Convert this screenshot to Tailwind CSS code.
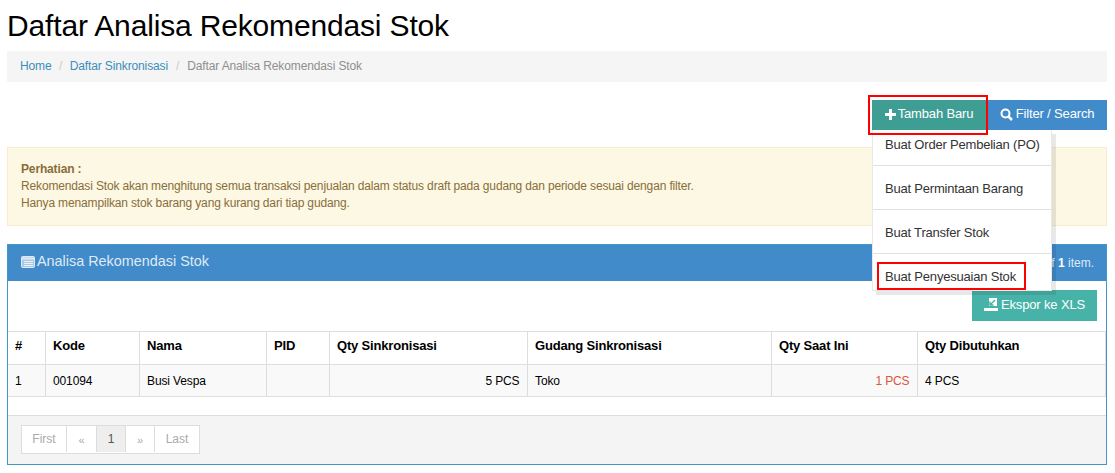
<!DOCTYPE html>
<html>
<head>
<meta charset="utf-8">
<script src="https://cdn.jsdelivr.net/npm/@tailwindcss/browser@4"></script>
</head>
<body class="bg-white font-['Liberation_Sans',Arial,sans-serif] text-[12px] text-[#000] overflow-hidden">
<div class="w-[1115px] h-[473px] px-[7px] relative overflow-hidden">
  <h1 class="text-[30px] leading-[33px] pt-[9px] h-[51px] text-black font-normal tracking-[-0.16px]">Daftar Analisa Rekomendasi Stok</h1>
  <nav class="h-[31px] bg-[#f5f5f5] flex items-center pl-[13px] w-[1100px] text-[12px] tracking-[-0.13px] pb-[1px]">
    <a class="text-[#3c8dbc]">Home</a><span class="text-[#ccc] px-[7.5px]">/</span>
    <a class="text-[#3c8dbc]">Daftar Sinkronisasi</a><span class="text-[#ccc] px-[8px]">/</span>
    <span class="text-[#8f8f8f]">Daftar Analisa Rekomendasi Stok</span>
  </nav>

  <div class="h-[18px]"></div>
  <div class="relative flex justify-end h-[30px] w-[1100px]">
    <button class="w-[114px] h-[30px] bg-[#3f9e94] text-white text-[13px] tracking-[-0.15px] flex items-center justify-center gap-[2px] pb-[2px]">
      <svg width="11" height="11" viewBox="0 0 11 11"><path d="M4 0h3v4h4v3H7v4H4V7H0V4h4z" fill="#fff"/></svg>Tambah Baru
    </button>
    <button class="w-[120px] h-[30px] bg-[#428bca] text-white text-[13px] tracking-[-0.15px] flex items-center justify-center gap-[3px] ml-[1px] pb-[2px]">
      <svg width="13" height="13" viewBox="0 0 13 13" fill="none"><circle cx="5.500" cy="5.500" r="4" stroke="#fff" stroke-width="2"/><path d="M8.500 8.500l3.500 3.500" stroke="#fff" stroke-width="2.500"/></svg>Filter / Search
    </button>

    <div class="absolute left-[865px] top-[30px] w-[180px] h-[161px] bg-white z-20 shadow-[4px_4px_0_rgba(0,0,0,0.09)] border-x border-b border-[#e8e8e8] text-[13px] tracking-[-0.2px] text-[#333]">
      <div class="h-[36px] pl-[12px] pt-[5px] border-b border-[#e0e0e0]">Buat Order Pembelian (PO)</div>
      <div class="h-[44px] pl-[12px] flex items-center border-b border-[#e0e0e0] pt-[2px]">Buat Permintaan Barang</div>
      <div class="h-[44px] pl-[12px] flex items-center border-b border-[#e0e0e0] pt-[2px]">Buat Transfer Stok</div>
      <div class="h-[36px] pl-[12px] flex items-center pt-[10px]">Buat Penyesuaian Stok</div>
    </div>
    <div class="absolute left-[861px] top-[-5px] w-[120px] h-[40px] border-2 border-[#f00] z-30"></div>
    <div class="absolute left-[870px] top-[162px] w-[149px] h-[28px] border-2 border-[#f00] z-30"></div>
  </div>

  <div class="h-[17px]"></div>
  <div class="w-[1100px] h-[79px] bg-[#fcf8e3] border border-[#faebcc] text-[#8a6d3b] px-[13px] pt-[13px] text-[12px] leading-[17px] tracking-[-0.15px]">
    <b>Perhatian :</b><br>
    Rekomendasi Stok akan menghitung semua transaksi penjualan dalam status draft pada gudang dan periode sesuai dengan filter.<br>
    Hanya menampilkan stok barang yang kurang dari tiap gudang.
  </div>

  <div class="h-[18px]"></div>
  <div class="w-[1100px] h-[221px] border border-[#3c9ac8] flex flex-col">
    <div class="h-[36px] shrink-0 bg-[#428bca] flex items-center justify-between pl-[13px] pr-[12px] text-white">
      <div class="flex items-center gap-[2px] text-[14.4px] text-[#dfeaf5] pb-[2px]">
        <svg width="14" height="12" viewBox="0 0 14 12"><rect x="0.500" y="0.500" width="13" height="11" rx="1" fill="#a9cbe8" stroke="#dfeaf5"/><path d="M1 2.500h12" stroke="#dfeaf5" stroke-width="2"/><path d="M3 5.500h9M3 7.500h9M3 9.500h9" stroke="#e8f0f8" stroke-width="1"/></svg>
        Analisa Rekomendasi Stok
      </div>
      <div class="text-[12px] text-[#dfeaf5]">Showing <b>1-1</b> of <b class="text-white">1</b> item.</div>
    </div>
    <div class="h-[50px] shrink-0 flex justify-end pt-[9px] pr-[9px]">
      <button class="w-[125px] h-[31px] bg-[#47b3a8] text-white text-[13px] tracking-[-0.15px] flex items-center justify-center gap-[3px] pb-[2px]">
        <svg width="14" height="14" viewBox="0 0 14 14"><path d="M5 0h8v8H5z" fill="#fff"/><path d="M11 2L6.500 6.500M6 3.500V7h3.500" stroke="#47b3a8" stroke-width="1.400" fill="none"/><path d="M0 10h14v3H0z" fill="#fff"/></svg>Ekspor ke XLS
      </button>
    </div>
    <table class="table-fixed border-collapse w-[1097px] text-[12px] text-black shrink-0 tracking-[-0.12px]">
      <colgroup>
        <col class="w-[37px]"><col class="w-[94px]"><col class="w-[127px]"><col class="w-[63px]"><col class="w-[198px]"><col class="w-[244px]"><col class="w-[146px]"><col class="w-[188px]">
      </colgroup>
      <thead>
        <tr class="h-[33px] text-left text-[13px] font-bold tracking-[-0.18px]">
          <th class="border border-l-0 border-[#ddd] pl-[7px] pb-[5px]">#</th>
          <th class="border border-[#ddd] pl-[7.5px] pb-[5px]">Kode</th>
          <th class="border border-[#ddd] pl-[7.5px] pb-[5px]">Nama</th>
          <th class="border border-[#ddd] pl-[7.5px] pb-[5px]">PID</th>
          <th class="border border-[#ddd] pl-[7.5px] pb-[5px]">Qty Sinkronisasi</th>
          <th class="border border-[#ddd] pl-[7.5px] pb-[5px]">Gudang Sinkronisasi</th>
          <th class="border border-[#ddd] pl-[7.5px] pb-[5px]">Qty Saat Ini</th>
          <th class="border border-[#ddd] pl-[7.5px] pb-[5px]">Qty Dibutuhkan</th>
        </tr>
      </thead>
      <tbody>
        <tr class="h-[32px] bg-[#f9f9f9]">
          <td class="border border-l-0 border-[#ddd] pl-[7px]">1</td>
          <td class="border border-[#ddd] pl-[7.5px]">001094</td>
          <td class="border border-[#ddd] pl-[7.5px]">Busi Vespa</td>
          <td class="border border-[#ddd] pl-[7.5px]"></td>
          <td class="border border-[#ddd] pr-[7px] text-right">5 PCS</td>
          <td class="border border-[#ddd] pl-[7.5px]">Toko</td>
          <td class="border border-[#ddd] pr-[7px] text-right text-[#d9583b]">1 PCS</td>
          <td class="border border-[#ddd] pl-[7.5px]">4 PCS</td>
        </tr>
      </tbody>
    </table>
    <div class="flex-1"></div>
    <div class="h-[49px] shrink-0 bg-[#f4f4f4] border-t border-[#ddd] pl-[13px] pt-[9px]">
      <div class="flex h-[29px] w-[179px] border border-[#ddd] bg-white text-[12px] text-[#aaa] pb-[1px]">
        <div class="w-[45px] flex items-center justify-center border-r border-[#ddd]">First</div>
        <div class="w-[30px] flex items-center justify-center border-r border-[#ddd] pt-[2px] text-[11px]">«</div>
        <div class="w-[29px] flex items-center justify-center border-r border-[#ddd] bg-[#eee] text-[#555]">1</div>
        <div class="w-[29px] flex items-center justify-center border-r border-[#ddd] pt-[2px] text-[11px]">»</div>
        <div class="flex-1 flex items-center justify-center">Last</div>
      </div>
    </div>
  </div>
</div>
</body>
</html>
